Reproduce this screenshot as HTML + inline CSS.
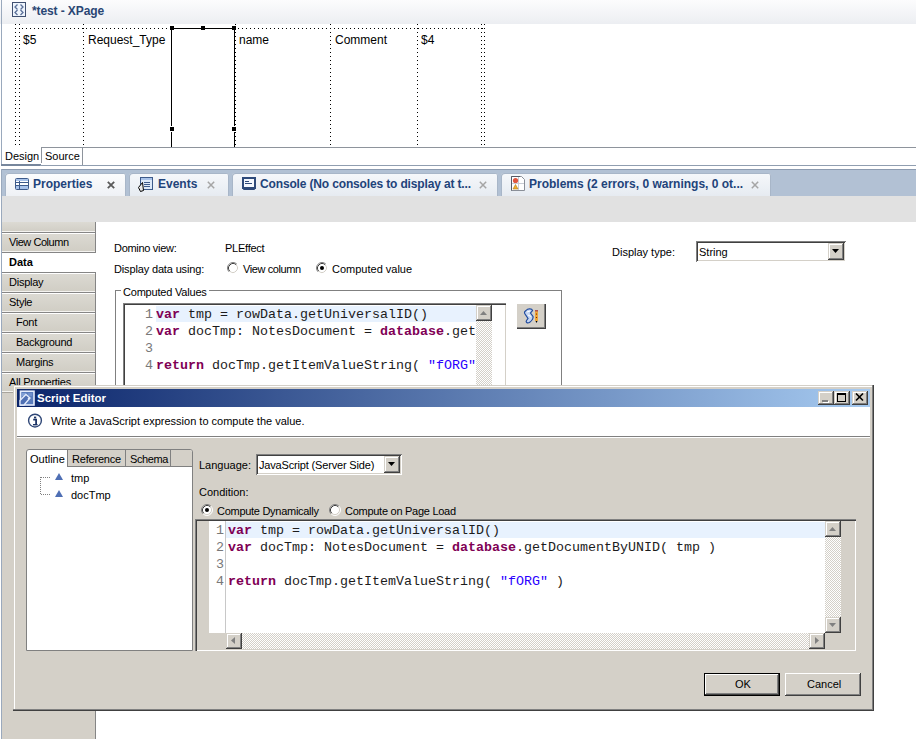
<!DOCTYPE html>
<html><head><meta charset="utf-8">
<style>
*{margin:0;padding:0;box-sizing:border-box}
html,body{width:916px;height:739px;overflow:hidden;background:#fff;font-family:"Liberation Sans",sans-serif;font-size:11px;color:#000}
body{position:relative}
.a{position:absolute}
.t{position:absolute;white-space:nowrap;line-height:13px}
.mono{font-family:"Liberation Mono",monospace;font-size:13.33px;line-height:17px;white-space:pre;color:#1c1c1c}
.kw{color:#7f0055;font-weight:bold}
.str{color:#2a00ff}
.ln{color:#787878}
.raised{background:#d4d0c8;box-shadow:inset -1px -1px 0 #404040,inset 1px 1px 0 #fff,inset -2px -2px 0 #808080}
.sunk{box-shadow:inset 1px 1px 0 #808080,inset -1px -1px 0 #fff,inset 2px 2px 0 #404040,inset -2px -2px 0 #d4d0c8}
.hatch{background-color:#d4d0c8;background-image:repeating-conic-gradient(#fff 0 25%,#d4d0c8 0 50%);background-size:2px 2px}
.btn16{position:absolute;width:16px;height:16px;background:#d4d0c8;box-shadow:inset -1px -1px 0 #404040,inset 1px 1px 0 #d4d0c8,inset -2px -2px 0 #808080,inset 2px 2px 0 #fff}
/* eclipse tabs */
.tab{position:absolute;top:0;height:23px;background:linear-gradient(#f6f8fb,#e6ebf1);border-radius:3px 3px 0 0;box-shadow:inset 1px 1px 0 #a8b6c8,inset -1px 0 0 #a8b6c8}
.tab .lbl{position:absolute;top:4px;font-weight:bold;font-size:12px;line-height:14px;color:#22437a;white-space:nowrap}
.tab .x{position:absolute;top:5px;font-size:13px;line-height:14px;color:#8a8a8a;font-weight:bold}
.it{position:absolute;left:0;width:94px;height:21px;border:1px solid #858585;border-left:none;background:linear-gradient(#dcdad3,#d0cdc4);box-shadow:inset 0 1px 0 #fff,inset 0 -1px 0 #f4f3f0}
.it span{position:absolute;left:7px;top:3px;font-size:11px;line-height:13px;letter-spacing:-0.25px}
</style></head><body>

<!-- ============ editor title ============ -->
<div class="a" style="left:0;top:0;width:916px;height:24px;background:linear-gradient(#fcfcfd,#eceef2)"></div>
<div class="a" style="left:1px;top:0;width:1px;height:166px;background:#9aa9bd"></div>
<svg class="a" style="left:12px;top:2px" width="14" height="15"><rect x="0.5" y="0.5" width="13" height="14" fill="#eef4fc" stroke="#3f4f70"/><path d="M5.5 2.5L3 5L5.5 7.5M8.5 2.5L11 5L8.5 7.5M5.5 8L3 10.5L5.5 13M8.5 8L11 10.5L8.5 13" fill="none" stroke="#5a6f98" stroke-width="1.3"/></svg>
<div class="t" style="left:32px;top:4px;font-size:12px;line-height:14px;font-weight:bold;color:#2a4674;letter-spacing:-0.1px">*test - XPage</div>

<!-- ============ design canvas ============ -->
<svg class="a" style="left:0;top:24px" width="500" height="124">
  <g stroke="#000" stroke-width="1" stroke-dasharray="1 3" fill="none">
    <line x1="15.5" y1="0" x2="15.5" y2="121"/>
    <line x1="19.5" y1="0" x2="19.5" y2="121"/>
    <line x1="83.5" y1="0" x2="83.5" y2="121"/>
    <line x1="235.5" y1="0" x2="235.5" y2="121"/>
    <line x1="330.5" y1="0" x2="330.5" y2="121"/>
    <line x1="417.5" y1="0" x2="417.5" y2="121"/>
    <line x1="481.5" y1="0" x2="481.5" y2="121"/>
    <line x1="484.5" y1="0" x2="484.5" y2="121"/>
    <line x1="22" y1="4.5" x2="484" y2="4.5"/>
  </g>
  <rect x="171" y="4" width="64" height="1" fill="#fff"/>
  <g fill="#000">
    <rect x="171" y="4" width="64" height="1"/>
    <rect x="171" y="4" width="1" height="120"/>
    <rect x="234" y="4" width="1" height="120"/>
    <rect x="170" y="2" width="4" height="4"/>
    <rect x="201" y="2" width="4" height="4"/>
    <rect x="232" y="2" width="4" height="4"/>
    <rect x="170" y="103" width="4" height="4"/>
    <rect x="232" y="103" width="4" height="4"/>
    <rect x="171" y="102" width="1" height="1" fill="#fff"/><rect x="171" y="107" width="1" height="1" fill="#fff"/><rect x="234" y="102" width="1" height="1" fill="#fff"/><rect x="234" y="107" width="1" height="1" fill="#fff"/>
  </g>
</svg>
<div class="t" style="left:23px;top:33px;font-size:12px;line-height:14px">$5</div>
<div class="t" style="left:88px;top:33px;font-size:12px;line-height:14px">Request_Type</div>
<div class="t" style="left:239px;top:33px;font-size:12px;line-height:14px">name</div>
<div class="t" style="left:335px;top:33px;font-size:12px;line-height:14px">Comment</div>
<div class="t" style="left:421px;top:33px;font-size:12px;line-height:14px">$4</div>

<!-- design / source tabs -->
<div class="a" style="left:41px;top:147px;width:875px;height:1px;background:#8e949c"></div>
<div class="a" style="left:82px;top:147px;width:1px;height:18px;background:#8e949c"></div>
<div class="a" style="left:41px;top:147px;width:1px;height:16px;background:#8e949c"></div>
<div class="a" style="left:1px;top:164px;width:40px;height:2px;background:#76869c"></div>
<div class="a" style="left:40px;top:165px;width:876px;height:1px;background:#909eb0"></div>
<div class="t" style="left:5px;top:150px">Design</div>
<div class="t" style="left:45px;top:150px">Source</div>

<!-- ============ properties view ============ -->
<div class="a" style="left:1px;top:169px;width:915px;height:27px;background:#b2c1d4;border-top:1px solid #8c9bb0"></div>
<div class="a" style="left:1px;top:169px;width:1px;height:570px;background:#9aa9bd"></div>

<div class="a" style="left:0;top:173px;width:916px;height:23px">
  <div class="tab" style="left:5px;width:121px;background:linear-gradient(#fdfdfe,#eef1f5)">
    <svg class="a" style="left:10px;top:5px" width="14" height="12"><rect x="0.5" y="0.5" width="13" height="11" rx="1" fill="#fff" stroke="#3d5a8a"/><rect x="1" y="1" width="12" height="2" fill="#a9c3ea"/><rect x="1" y="8" width="12" height="3" fill="#a9c3ea"/><path d="M1 4.5H13M1 7.5H13M4.5 3V11" stroke="#3d5a8a" stroke-width="1"/></svg>
    <span class="lbl" style="left:28px">Properties</span>
    <svg class="a" style="left:102px;top:8px" width="8" height="8"><path d="M0.8 0.8L7.2 7.2M7.2 0.8L0.8 7.2" stroke="#5a5a5a" stroke-width="1.8"/></svg>
  </div>
  <div class="tab" style="left:129px;width:100px">
    <svg class="a" style="left:9px;top:4px" width="16" height="17"><rect x="2.5" y="0.5" width="12" height="12" fill="#dde9f8" stroke="#3d5a8a"/><rect x="3" y="1" width="11" height="2" fill="#a9c3ea"/><path d="M6 5.5H12M6 7.5H12M6 9.5H12" stroke="#3d5a8a"/><path d="M4.5 5.5 L0.5 10.5 L2.5 14.5 L5.5 13.5 Z" fill="#e8e8e8" stroke="#000" stroke-width="1"/></svg>
    <span class="lbl" style="left:29px">Events</span>
    <svg class="a" style="left:78px;top:8px" width="8" height="8"><path d="M0.8 0.8L7.2 7.2M7.2 0.8L0.8 7.2" stroke="#a5a5a5" stroke-width="1.5"/></svg>
  </div>
  <div class="tab" style="left:232px;width:266px">
    <svg class="a" style="left:10px;top:4px" width="14" height="14"><rect x="1" y="1" width="12" height="10" fill="#f4f8fe" stroke="#2e4a7a" stroke-width="2"/><path d="M3 4.5H7M3 6.5H10" stroke="#2e4a7a"/><rect x="1" y="11" width="12" height="2" rx="1" fill="#2e4a7a"/></svg>
    <span class="lbl" style="left:28px;letter-spacing:-0.15px">Console (No consoles to display at t...</span>
    <svg class="a" style="left:247px;top:8px" width="8" height="8"><path d="M0.8 0.8L7.2 7.2M7.2 0.8L0.8 7.2" stroke="#a5a5a5" stroke-width="1.5"/></svg>
  </div>
  <div class="tab" style="left:501px;width:270px">
    <svg class="a" style="left:10px;top:3px" width="15" height="16"><path d="M0.5 0.5H10.5L13.5 3.5V14.5H0.5Z" fill="#fff" stroke="#8a8f98"/><path d="M0.5 14.5V0.5H9" fill="none" stroke="#555a66"/><path d="M1 7.5H13M7.5 1V14" stroke="#c8ccd4"/><circle cx="4.5" cy="4.5" r="2.6" fill="#e0553f"/><path d="M2 13 L4.5 8.5 L7 13 Z" fill="#f0b030" stroke="#b07818" stroke-width="0.6"/></svg>
    <span class="lbl" style="left:28px">Problems (2 errors, 0 warnings, 0 ot...</span>
    <svg class="a" style="left:250px;top:8px" width="8" height="8"><path d="M0.8 0.8L7.2 7.2M7.2 0.8L0.8 7.2" stroke="#a5a5a5" stroke-width="1.5"/></svg>
  </div>
</div>

<div class="a" style="left:2px;top:196px;width:914px;height:26px;background:#e1e1e1"></div>

<!-- sidebar -->
<div class="a" style="left:2px;top:222px;width:94px;height:517px;background:#d4d0c8;border-right:1px solid #858585"></div>
<div class="a" style="left:2px;top:222px;width:94px;height:517px">
  <div class="it" style="top:0;height:11px;border-top:none;box-shadow:inset 0 -1px 0 #f4f3f0"></div>
  <div class="it" style="top:10px"><span style="letter-spacing:-0.45px">View Column</span></div>
  <div class="a" style="left:0;top:31px;width:94px;height:19px;background:#fff"></div>
  <div class="t" style="left:7px;top:34px;font-weight:bold">Data</div>
  <div class="it" style="top:50px"><span>Display</span></div>
  <div class="it" style="top:70px"><span>Style</span></div>
  <div class="it" style="top:90px"><span style="left:14px">Font</span></div>
  <div class="it" style="top:110px"><span style="left:14px">Background</span></div>
  <div class="it" style="top:130px"><span style="left:14px">Margins</span></div>
  <div class="it" style="top:150px;border-bottom-color:#a8a49c"><span>All Properties</span></div>
</div>

<!-- content -->
<div class="t" style="left:114px;top:242px;letter-spacing:-0.3px">Domino view:</div>
<div class="t" style="left:225px;top:242px;letter-spacing:-0.25px">PLEffect</div>
<div class="t" style="left:114px;top:263px;letter-spacing:-0.15px">Display data using:</div>
<svg class="a" style="left:227px;top:262px" width="12" height="12"><circle cx="6" cy="6" r="5" fill="#fff"/><path d="M2.11 9.89A5.5 5.5 0 0 1 9.89 2.11" fill="none" stroke="#808080"/><path d="M9.89 2.11A5.5 5.5 0 0 1 2.11 9.89" fill="none" stroke="#fff"/><path d="M2.82 9.18A4.5 4.5 0 0 1 9.18 2.82" fill="none" stroke="#404040"/><path d="M9.18 2.82A4.5 4.5 0 0 1 2.82 9.18" fill="none" stroke="#d4d0c8"/></svg>
<div class="t" style="left:243px;top:263px;letter-spacing:-0.4px">View column</div>
<svg class="a" style="left:316px;top:262px" width="12" height="12"><circle cx="6" cy="6" r="5" fill="#fff"/><path d="M2.11 9.89A5.5 5.5 0 0 1 9.89 2.11" fill="none" stroke="#808080"/><path d="M9.89 2.11A5.5 5.5 0 0 1 2.11 9.89" fill="none" stroke="#fff"/><path d="M2.82 9.18A4.5 4.5 0 0 1 9.18 2.82" fill="none" stroke="#404040"/><path d="M9.18 2.82A4.5 4.5 0 0 1 2.82 9.18" fill="none" stroke="#d4d0c8"/><circle cx="6" cy="6" r="2" fill="#000"/></svg>
<div class="t" style="left:332px;top:263px">Computed value</div>

<div class="t" style="left:612px;top:246px">Display type:</div>
<div class="a sunk" style="left:696px;top:241px;width:150px;height:21px;background:#fff"></div>
<div class="t" style="left:699px;top:246px">String</div>
<div class="btn16" style="left:828px;top:243px;width:16px;height:17px"></div>
<svg class="a" style="left:832px;top:249px" width="9" height="5"><path d="M0 0H7L3.5 4Z" fill="#000"/></svg>

<!-- group box -->
<div class="a" style="left:115px;top:290px;width:447px;height:100px;border:1px solid #808080;box-shadow:inset 1px 1px 0 #fff,1px 1px 0 #fff"></div>
<div class="a" style="left:121px;top:285px;width:88px;height:12px;background:#fff"></div>
<div class="t" style="left:123px;top:286px;letter-spacing:-0.2px">Computed Values</div>

<!-- code box -->
<div class="a" style="left:123px;top:303px;width:383px;height:90px;background:#fff;box-shadow:inset 1px 1px 0 #808080,inset 2px 2px 0 #404040,inset -1px 0 0 #d4d0c8"></div>
<div class="a" style="left:156px;top:306px;width:320px;height:16px;background:#e8f2fe"></div>
<div class="a mono ln" style="left:130px;top:306px;width:23px;text-align:right">1
2
3
4</div>
<div class="a mono" style="left:156px;top:306px;width:320px;height:80px;overflow:hidden"><span class="kw">var</span> tmp = rowData.getUniversalID()
<span class="kw">var</span> docTmp: NotesDocument = <span class="kw">database</span>.getDocumentByUNID( tmp )

<span class="kw">return</span> docTmp.getItemValueString( <span class="str">"fORG"</span> )</div>
<div class="a hatch" style="left:476px;top:305px;width:16px;height:85px"></div>
<div class="btn16" style="left:476px;top:305px"></div>
<svg class="a" style="left:480px;top:311px" width="9" height="5"><path d="M0 4H7L3.5 0Z" fill="#808080"/></svg>

<div class="a" style="left:517px;top:304px;width:29px;height:25px;background:#d4d0c8;box-shadow:inset -1px -1px 0 #404040,inset -2px -2px 0 #808080"></div>
<svg class="a" style="left:523px;top:308px" width="17" height="16"><path d="M3 2.5 C5 0 9 0.5 9.5 2.5 L7.5 5 L10 8.5 C10.5 10.5 9 12.5 6.5 14.5 C4 15.5 2.5 14 3.5 12.5 L5 10.5 L2 6 C1 4.5 1.5 3.5 3 2.5Z" fill="#c5d6f2" stroke="#1f4a9e" stroke-width="1.2"/><path d="M4 4 L7 3 M5 7 L8 8.5" stroke="#fff" stroke-width="1"/><rect x="12" y="2" width="3" height="11" fill="#f0a838"/><rect x="12" y="2" width="3" height="1.5" fill="#b05050"/><path d="M12.5 13 L13.5 15 L14.5 13Z" fill="#000"/><circle cx="13.5" cy="6" r="0.6" fill="#600"/><circle cx="13.5" cy="9.5" r="0.6" fill="#600"/></svg>

<!-- ============ dialog ============ -->
<div class="a" style="left:13px;top:385px;width:861px;height:326px;background:#d4d0c8;box-shadow:inset -1px -1px 0 #404040,inset -2px -2px 0 #808080,inset 1px 1px 0 #d4d0c8,inset 2px 2px 0 #fff"></div>
<div class="a" style="left:17px;top:389px;width:853px;height:18px;background:linear-gradient(90deg,#0a246a,#a6caf0)"></div>
<svg class="a" style="left:19px;top:390px" width="17" height="17"><rect x="1.5" y="1.2" width="13.5" height="13.8" fill="#5a7cbc" stroke="#e4ecfc" stroke-width="1.6"/><rect x="3" y="3" width="4" height="3" fill="#7f9ed6"/><rect x="9" y="3" width="4" height="3" fill="#6f8ecb"/><path d="M1 10.5 L7 4.5 L11 8 L5 15 L1 15Z" fill="#4f70b4" stroke="#e4ecfc" stroke-width="1.3"/><path d="M9 9 L10.5 7.5" stroke="#e4ecfc" stroke-width="1.2"/></svg>
<div class="t" style="left:37px;top:391px;font-weight:bold;font-size:11.5px;line-height:14px;color:#fff">Script Editor</div>
<div class="btn16" style="left:818px;top:391px;height:14px"></div>
<div class="btn16" style="left:834px;top:391px;height:14px"></div>
<div class="btn16" style="left:852px;top:391px;height:14px"></div>
<div class="a" style="left:822px;top:400px;width:6px;height:2px;background:#808080;box-shadow:1px 1px 0 #fff"></div>
<div class="a" style="left:837px;top:393px;width:9px;height:9px;border:1px solid #000;border-top-width:2px"></div>
<svg class="a" style="left:855px;top:393px" width="10" height="9"><path d="M1 0.5L8 7.5M8 0.5L1 7.5" stroke="#000" stroke-width="1.6"/></svg>

<!-- info area -->
<div class="a" style="left:17px;top:407px;width:853px;height:29px;background:#fff"></div>
<div class="a" style="left:17px;top:436px;width:853px;height:1px;background:#808080"></div>
<div class="a" style="left:17px;top:437px;width:853px;height:1px;background:#fff"></div>
<svg class="a" style="left:27px;top:413px" width="16" height="16"><circle cx="8" cy="7.6" r="6.4" fill="#fff" stroke="#2e4676" stroke-width="1.4"/><rect x="7" y="3.6" width="2.2" height="1.8" fill="#1e3566"/><path d="M6.2 6.6H9.1V11.2" fill="none" stroke="#1e3566" stroke-width="1.8"/><rect x="6" y="11" width="4.6" height="1.4" fill="#1e3566"/></svg>
<div class="t" style="left:51px;top:415px">Write a JavaScript expression to compute the value.</div>

<!-- outline panel -->
<div class="a" style="left:26px;top:449px;width:167px;height:202px;background:#fff;border:1px solid #808080;border-radius:3px 3px 0 0"></div>
<div class="a" style="left:67px;top:450px;width:125px;height:16px;background:#d4d0c8;border-top-right-radius:2px"></div>
<div class="a" style="left:67px;top:450px;width:1px;height:16px;background:#808080"></div>
<div class="a" style="left:125px;top:450px;width:1px;height:16px;background:#808080"></div>
<div class="a" style="left:170px;top:450px;width:1px;height:16px;background:#808080"></div>
<div class="a" style="left:67px;top:466px;width:125px;height:1px;background:#808080"></div>
<div class="t" style="left:30px;top:453px">Outline</div>
<div class="t" style="left:72px;top:453px;letter-spacing:-0.2px">Reference</div>
<div class="t" style="left:130px;top:453px;letter-spacing:-0.4px">Schema</div>
<svg class="a" style="left:38px;top:472px" width="30" height="30"><path d="M2.5 5V22M3 5.5H13M3 22.5H13" fill="none" stroke="#808080" stroke-dasharray="1 1"/><path d="M17 8 L21 1 L25 8 Z" fill="#4f6fb4"/><path d="M17 25 L21 18 L25 25 Z" fill="#4f6fb4"/></svg>
<div class="t" style="left:71px;top:472px">tmp</div>
<div class="t" style="left:71px;top:489px">docTmp</div>

<!-- language / condition -->
<div class="t" style="left:199px;top:459px">Language:</div>
<div class="a sunk" style="left:256px;top:454px;width:146px;height:21px;background:#fff"></div>
<div class="t" style="left:259px;top:459px;letter-spacing:-0.17px">JavaScript (Server Side)</div>
<div class="btn16" style="left:384px;top:456px;width:16px;height:17px"></div>
<svg class="a" style="left:388px;top:462px" width="9" height="5"><path d="M0 0H7L3.5 4Z" fill="#000"/></svg>
<div class="t" style="left:199px;top:486px">Condition:</div>
<svg class="a" style="left:201px;top:504px" width="12" height="12"><circle cx="6" cy="6" r="5" fill="#fff"/><path d="M2.11 9.89A5.5 5.5 0 0 1 9.89 2.11" fill="none" stroke="#808080"/><path d="M9.89 2.11A5.5 5.5 0 0 1 2.11 9.89" fill="none" stroke="#fff"/><path d="M2.82 9.18A4.5 4.5 0 0 1 9.18 2.82" fill="none" stroke="#404040"/><path d="M9.18 2.82A4.5 4.5 0 0 1 2.82 9.18" fill="none" stroke="#d4d0c8"/><circle cx="6" cy="6" r="2" fill="#000"/></svg>
<div class="t" style="left:217px;top:505px;letter-spacing:-0.28px">Compute Dynamically</div>
<svg class="a" style="left:329px;top:504px" width="12" height="12"><circle cx="6" cy="6" r="5" fill="#fff"/><path d="M2.11 9.89A5.5 5.5 0 0 1 9.89 2.11" fill="none" stroke="#808080"/><path d="M9.89 2.11A5.5 5.5 0 0 1 2.11 9.89" fill="none" stroke="#fff"/><path d="M2.82 9.18A4.5 4.5 0 0 1 9.18 2.82" fill="none" stroke="#404040"/><path d="M9.18 2.82A4.5 4.5 0 0 1 2.82 9.18" fill="none" stroke="#d4d0c8"/></svg>
<div class="t" style="left:345px;top:505px;letter-spacing:-0.27px">Compute on Page Load</div>

<!-- dialog code editor -->
<div class="a" style="left:195px;top:519px;width:661px;height:132px;background:#d4d0c8;box-shadow:inset 1px 1px 0 #808080,inset 2px 2px 0 #404040,inset -1px -1px 0 #fff"></div>
<div class="a" style="left:209px;top:521px;width:616px;height:112px;background:#fff"></div>
<div class="a" style="left:225px;top:521px;width:1px;height:112px;background:#c8c8c8"></div>
<div class="a" style="left:226px;top:522px;width:599px;height:16px;background:#e8f2fe"></div>
<div class="a mono ln" style="left:200px;top:522px;width:24px;text-align:right">1
2
3
4</div>
<div class="a mono" style="left:228px;top:522px;width:597px;height:110px;overflow:hidden"><span class="kw">var</span> tmp = rowData.getUniversalID()
<span class="kw">var</span> docTmp: NotesDocument = <span class="kw">database</span>.getDocumentByUNID( tmp )

<span class="kw">return</span> docTmp.getItemValueString( <span class="str">"fORG"</span> )</div>
<div class="a hatch" style="left:825px;top:521px;width:16px;height:112px"></div>
<div class="btn16" style="left:825px;top:521px"></div>
<div class="btn16" style="left:825px;top:617px"></div>
<svg class="a" style="left:829px;top:527px" width="9" height="5"><path d="M0 4H7L3.5 0Z" fill="#808080"/></svg>
<svg class="a" style="left:829px;top:623px" width="9" height="5"><path d="M0 0H7L3.5 4Z" fill="#808080"/></svg>
<div class="a hatch" style="left:226px;top:633px;width:599px;height:16px"></div>
<div class="btn16" style="left:226px;top:633px"></div>
<div class="btn16" style="left:809px;top:633px"></div>
<svg class="a" style="left:231px;top:637px" width="5" height="9"><path d="M4 0V7L0 3.5Z" fill="#808080"/></svg>
<svg class="a" style="left:815px;top:637px" width="5" height="9"><path d="M0 0V7L4 3.5Z" fill="#808080"/></svg>

<!-- buttons -->
<div class="a" style="left:704px;top:673px;width:76px;height:23px;background:#d4d0c8;border:1px solid #000;box-shadow:inset -1px -1px 0 #404040,inset 1px 1px 0 #fff,inset -2px -2px 0 #808080"></div>
<div class="t" style="left:735px;top:678px">OK</div>
<div class="a" style="left:785px;top:673px;width:76px;height:23px;background:#d4d0c8;box-shadow:inset -1px -1px 0 #404040,inset 1px 1px 0 #fff,inset -2px -2px 0 #808080"></div>
<div class="t" style="left:807px;top:678px">Cancel</div>

</body></html>
